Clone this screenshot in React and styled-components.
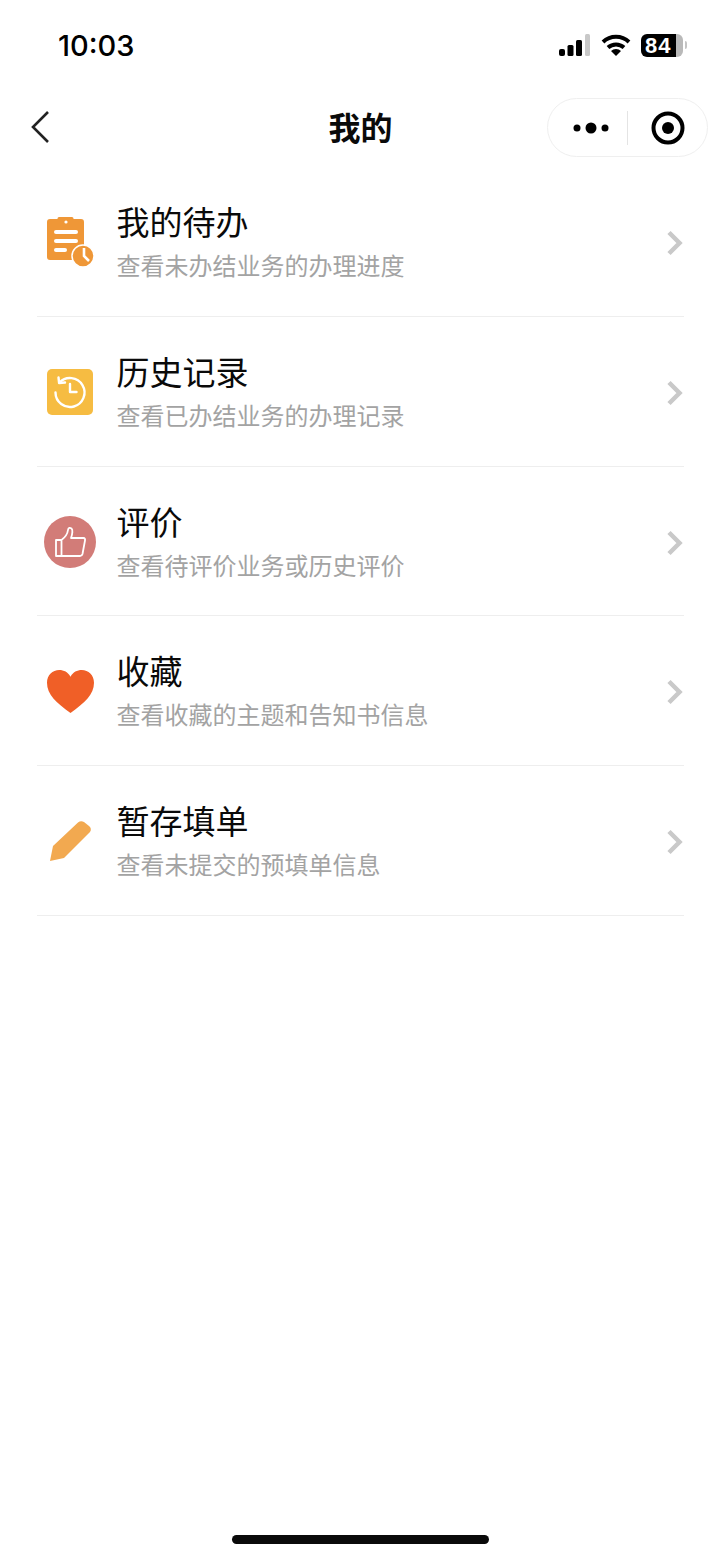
import React from "react";
import styled, { createGlobalStyle } from "styled-components";

const Global = createGlobalStyle`
  html, body { margin: 0; padding: 0; background: #fff; }
  body { font-family: "Noto Sans CJK SC", "Liberation Sans", sans-serif; }
`;
const Page = styled.div`
  position: relative;
  width: 721px;
  height: 1559px;
  background: #fff;
  overflow: hidden;
`;
const StatusBar = styled.div`
  height: 92px;
  display: flex;
  justify-content: space-between;
  align-items: flex-start;
  padding: 28px 34px 0 58px;
  box-sizing: border-box;
`;
const Time = styled.div`
  font-family: Inter, "Liberation Sans", sans-serif;
  font-size: 29px;
  line-height: 36px;
  font-weight: 500;
  color: #000;
`;
const StatusIcons = styled.div`
  display: flex;
  align-items: center;
  gap: 10px;
  height: 36px;
  margin-top: -1px;
`;
const Battery = styled.div`
  width: 42px;
  height: 23px;
  border-radius: 6px;
  background: linear-gradient(90deg, #000 84%, #b9b9b9 84%);
  color: #fff;
  font-family: "Liberation Sans", sans-serif;
  font-size: 22px;
  font-weight: 700;
  line-height: 23px;
  padding-left: 4px;
  box-sizing: border-box;
  letter-spacing: 1px;
`;
const BatteryWrap = styled.div`
  display: flex;
  align-items: center;
  gap: 2px;
`;
const BatteryCap = styled.div`
  width: 2px;
  height: 8px;
  border-radius: 0 2px 2px 0;
  background: #c4c4c4;
`;
const NavBar = styled.div`
  position: relative;
  height: 75.4px;
  display: flex;
  align-items: center;
  justify-content: center;
`;
const Back = styled.div`
  position: absolute;
  left: 31px;
  top: 18px;
  line-height: 0;
`;
const Title = styled.div`
  font-size: 32px;
  line-height: 40px;
  font-weight: 700;
  color: #0a0a0a;
  margin-top: -8px;
`;
const Capsule = styled.div`
  position: absolute;
  left: 547px;
  top: 6px;
  width: 161px;
  height: 59px;
  box-sizing: border-box;
  border: 1px solid #efefef;
  border-radius: 30px;
  display: flex;
  align-items: center;
`;
const CapsuleSide = styled.div`
  flex: 1;
  display: flex;
  justify-content: center;
  align-items: center;
  line-height: 0;
`;
const CapsuleDivider = styled.div`
  width: 1px;
  height: 34px;
  background: #e4e4e4;
`;
const List = styled.div`
  padding: 0 37px;
`;
const Row = styled.div`
  height: 149.7px;
  box-sizing: border-box;
  display: flex;
  align-items: center;
  border-bottom: 1px solid #eeeeee;
`;
const IconBox = styled.div`
  width: 66px;
  margin-right: 13.5px;
  flex: none;
  display: flex;
  justify-content: center;
  line-height: 0;
  padding-top: 1px;
`;
const Texts = styled.div`
  flex: 1;
  display: flex;
  flex-direction: column;
  gap: 6px;
  margin-bottom: 3px;
`;
const RowTitle = styled.div`
  font-size: 33px;
  line-height: 44px;
  color: #0a0a0a;
`;
const RowSub = styled.div`
  font-size: 24px;
  line-height: 32px;
  color: #a3a3a3;
`;
const Chevron = styled.div`
  width: 18px;
  line-height: 0;
  padding-top: 3px;
`;
const HomeIndicator = styled.div`
  position: absolute;
  left: 232px;
  top: 1535px;
  width: 257px;
  height: 9px;
  border-radius: 5px;
  background: #0a0a0a;
`;

const TodoIcon = () => (
  <svg width="47" height="50" viewBox="0 0 47 50">
    <path d="M3 2h7.500V1.500A1.500 1.500 0 0 1 12 0h13a1.500 1.500 0 0 1 1.500 1.500V2H34a3 3 0 0 1 3 3v35a3 3 0 0 1-3 3H3a3 3 0 0 1-3-3V5a3 3 0 0 1 3-3z" fill="#ef9737" />
    <circle cx="19" cy="5" r="1.600" fill="#fff" />
    <rect x="7" y="13" width="24" height="4" rx="2" fill="#fff" />
    <rect x="7" y="22" width="24" height="4" rx="2" fill="#fff" />
    <rect x="7" y="31" width="13" height="4" rx="2" fill="#fff" />
    <circle cx="36" cy="39" r="11" fill="#ef9737" stroke="#fff" strokeWidth="1.500" />
    <path d="M37 31v8l5 5" fill="none" stroke="#fff" strokeWidth="2.600" />
  </svg>
);
const HistoryIcon = () => (
  <svg width="46" height="46" viewBox="0 0 46 46">
    <rect width="46" height="46" rx="5" fill="#f6bc42" />
    <path d="M12.500 13.500a14.500 14.500 0 1 1-4 10" fill="none" stroke="#fff" strokeWidth="2.400" strokeLinecap="round" />
    <path d="M11.500 8.500l.6 5.500 5.900-.5" fill="none" stroke="#fff" strokeWidth="2.400" strokeLinecap="round" strokeLinejoin="round" />
    <path d="M23 15v8h6.500" fill="none" stroke="#fff" strokeWidth="2.400" strokeLinecap="round" strokeLinejoin="round" />
  </svg>
);
const ThumbIcon = () => (
  <svg width="52" height="52" viewBox="0 0 52 52">
    <circle cx="26" cy="26" r="26" fill="#d27c78" />
    <path d="M12 24h5.500v16H12zM17.500 24c4-3 6-6 6.500-10 .3-2.500 2-2.500 3.500-1.500 1.500 1.200.9 6-.5 9.500H39.500c1.300 0 1.800 1 1.500 2.500L38.500 38c-.4 1.500-1.200 2-2.500 2H17.500z" fill="none" stroke="#fff" strokeWidth="1.800" strokeLinejoin="round" />
  </svg>
);
const HeartIcon = () => (
  <svg width="47" height="43" viewBox="0 0 46 42">
    <path d="M23 42C9 32 0 24 0 12.500 0 5 5.500 0 12 0c4.500 0 8.500 2 11 6.500C25.500 2 29.500 0 34 0c6.500 0 12 5 12 12.500C46 24 37 32 23 42z" fill="#f05f27" />
  </svg>
);
const PencilIcon = () => (
  <svg width="44" height="42" viewBox="-2 0 44 42">
    <path d="M3 26L28 2.500c2-1.700 4-1.700 6-.5l5 4c2 1.500 2.500 4 1 6L14 38 0 41z" fill="#f2a950" />
  </svg>
);

const items = [
  { title: "我的待办", sub: "查看未办结业务的办理进度", icon: <TodoIcon /> },
  { title: "历史记录", sub: "查看已办结业务的办理记录", icon: <HistoryIcon /> },
  { title: "评价", sub: "查看待评价业务或历史评价", icon: <ThumbIcon /> },
  { title: "收藏", sub: "查看收藏的主题和告知书信息", icon: <HeartIcon /> },
  { title: "暂存填单", sub: "查看未提交的预填单信息", icon: <PencilIcon /> },
];

export default function App() {
  return (
    <Page>
      <Global />
      <StatusBar>
        <Time>10:03</Time>
        <StatusIcons>
          <svg width="32" height="22" viewBox="0 0 32 22">
            <rect x="0" y="15" width="6" height="7" rx="2" fill="#000" />
            <rect x="8.500" y="11" width="6" height="11" rx="1.500" fill="#000" />
            <rect x="17" y="6" width="6" height="16" rx="1.500" fill="#000" />
            <rect x="26" y="0" width="5" height="22" rx="1.500" fill="#c8c8c8" />
          </svg>
          <svg width="30" height="22" viewBox="0 0 30 22">
            <path d="M2 8a19 19 0 0 1 26 0" fill="none" stroke="#000" strokeWidth="4" />
            <path d="M7 13.500a12 12 0 0 1 16 0" fill="none" stroke="#000" strokeWidth="4" />
            <path d="M15 22l-5-5a7 7 0 0 1 10 0z" fill="#000" />
          </svg>
          <BatteryWrap>
            <Battery>84</Battery>
            <BatteryCap />
          </BatteryWrap>
        </StatusIcons>
      </StatusBar>
      <NavBar>
        <Back>
          <svg width="20" height="34" viewBox="0 0 20 34">
            <path d="M17 2L2 17l15 15" fill="none" stroke="#222" strokeWidth="2.600" />
          </svg>
        </Back>
        <Title>我的</Title>
        <Capsule>
          <CapsuleSide>
            <svg width="42" height="12" viewBox="-6 0 42 12">
              <circle cx="4" cy="6" r="3.500" fill="#000" />
              <circle cx="18" cy="6" r="5.500" fill="#000" />
              <circle cx="32" cy="6" r="3.500" fill="#000" />
            </svg>
          </CapsuleSide>
          <CapsuleDivider />
          <CapsuleSide>
            <svg width="34" height="34" viewBox="0 0 34 34">
              <circle cx="17" cy="17" r="14.500" fill="none" stroke="#000" strokeWidth="4" />
              <circle cx="17" cy="17" r="6" fill="#000" />
            </svg>
          </CapsuleSide>
        </Capsule>
      </NavBar>
      <List>
        {items.map((it) => (
          <Row key={it.title}>
            <IconBox>{it.icon}</IconBox>
            <Texts>
              <RowTitle>{it.title}</RowTitle>
              <RowSub>{it.sub}</RowSub>
            </Texts>
            <Chevron>
              <svg width="18" height="26" viewBox="0 0 18 26">
                <path d="M3 2.500L13.500 13 3 23.500" fill="none" stroke="#c9c9c9" strokeWidth="4.500" />
              </svg>
            </Chevron>
          </Row>
        ))}
      </List>
      <HomeIndicator />
    </Page>
  );
}
